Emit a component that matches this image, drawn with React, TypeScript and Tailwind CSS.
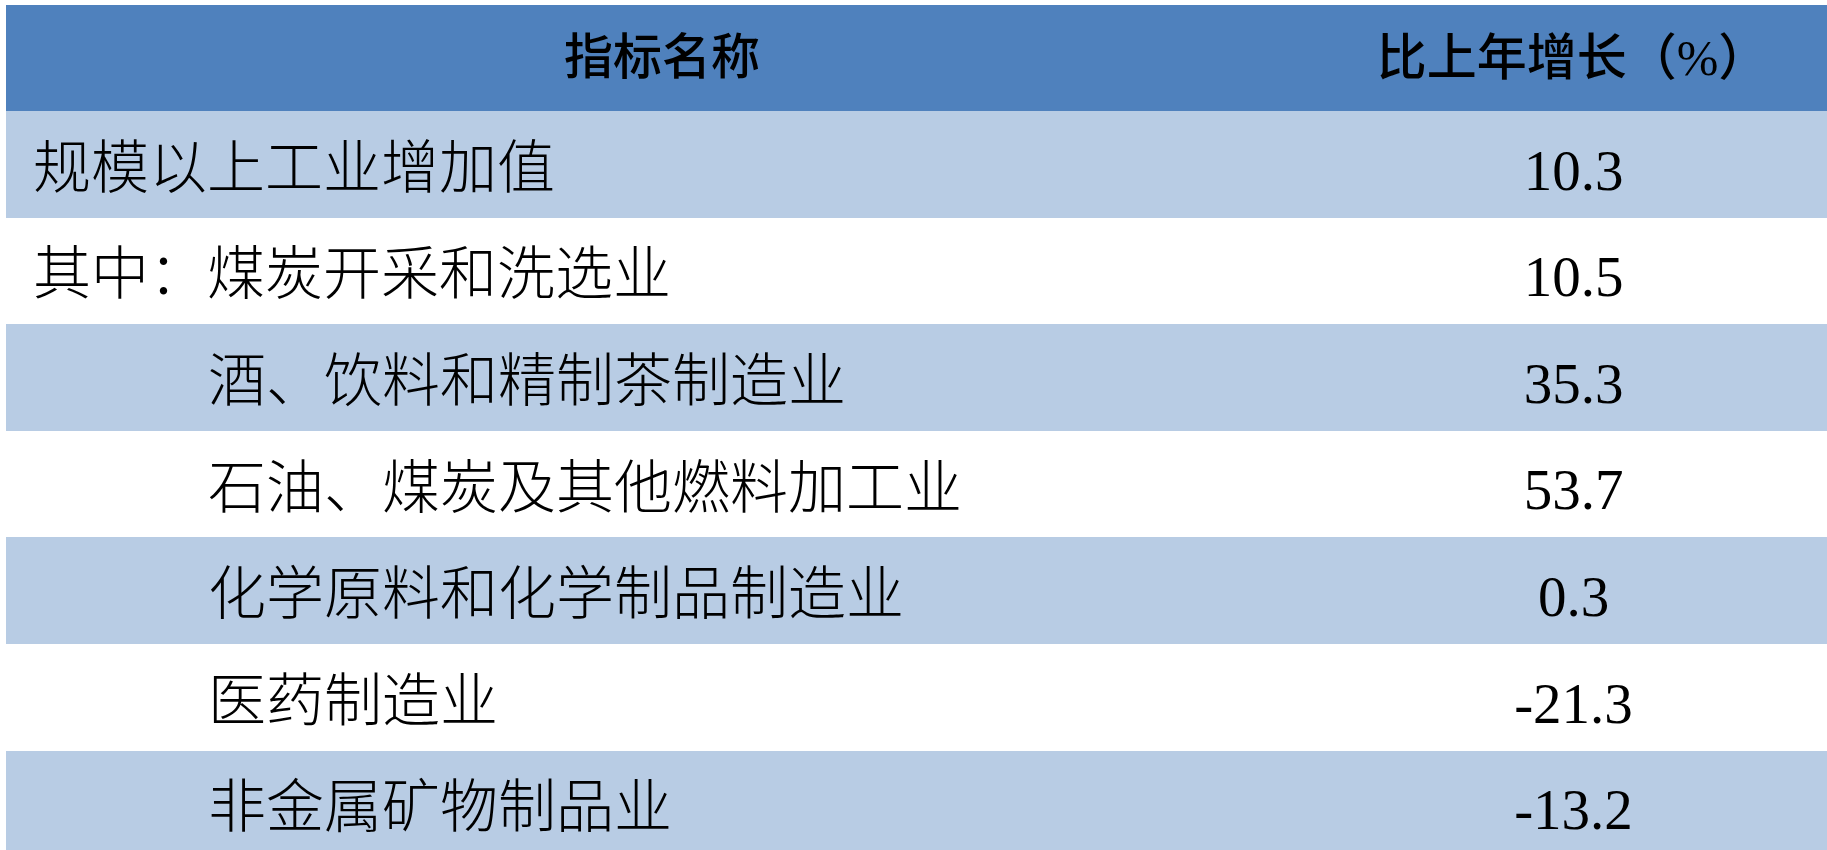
const rows = [
  { name: "规模以上工业增加值", v: "10.3", indent: false },
  { name: "其中：煤炭开采和洗选业", v: "10.5", indent: false },
  { name: "酒、饮料和精制茶制造业", v: "35.3", indent: true },
  { name: "石油、煤炭及其他燃料加工业", v: "53.7", indent: true },
  { name: "化学原料和化学制品制造业", v: "0.3", indent: true },
  { name: "医药制造业", v: "-21.3", indent: true },
  { name: "非金属矿物制品业", v: "-13.2", indent: true },
];

export default function App() {
  return (
    <div className="h-[850px] w-[1827px] overflow-hidden bg-white pl-[6px] pt-[5px] text-black [font-family:'Liberation_Serif','Noto_Sans_CJK_SC',serif]">
      <div className="grid grid-cols-[1314px_507px]">
        <div className="flex h-[106px] items-center justify-center bg-[#4f81bd] pr-[2px] text-[49px] font-medium">
          指标名称
        </div>
        <div className="flex h-[106px] items-center justify-center bg-[#4f81bd] pr-[2px] text-[50px] font-medium">
          比上年增长（%）
        </div>
        {rows.map((r, i) => (
          <Row key={r.name} name={r.name} v={r.v} indent={r.indent} shaded={i % 2 === 0} />
        ))}
      </div>
    </div>
  );
}

function Row({ name, v, indent, shaded }: { name: string; v: string; indent: boolean; shaded: boolean }) {
  const bg = shaded ? "bg-[#b8cce4]" : "bg-white";
  return (
    <>
      <div className={`flex h-[106.6px] items-center pt-[8px] text-[58px] font-light ${indent ? "pl-[202px]" : "pl-[27px]"} ${bg}`}>
        {name}
      </div>
      <div className={`flex h-[106.6px] items-center justify-center pt-[12px] text-[57px] ${bg}`}>
        {v}
      </div>
    </>
  );
}
